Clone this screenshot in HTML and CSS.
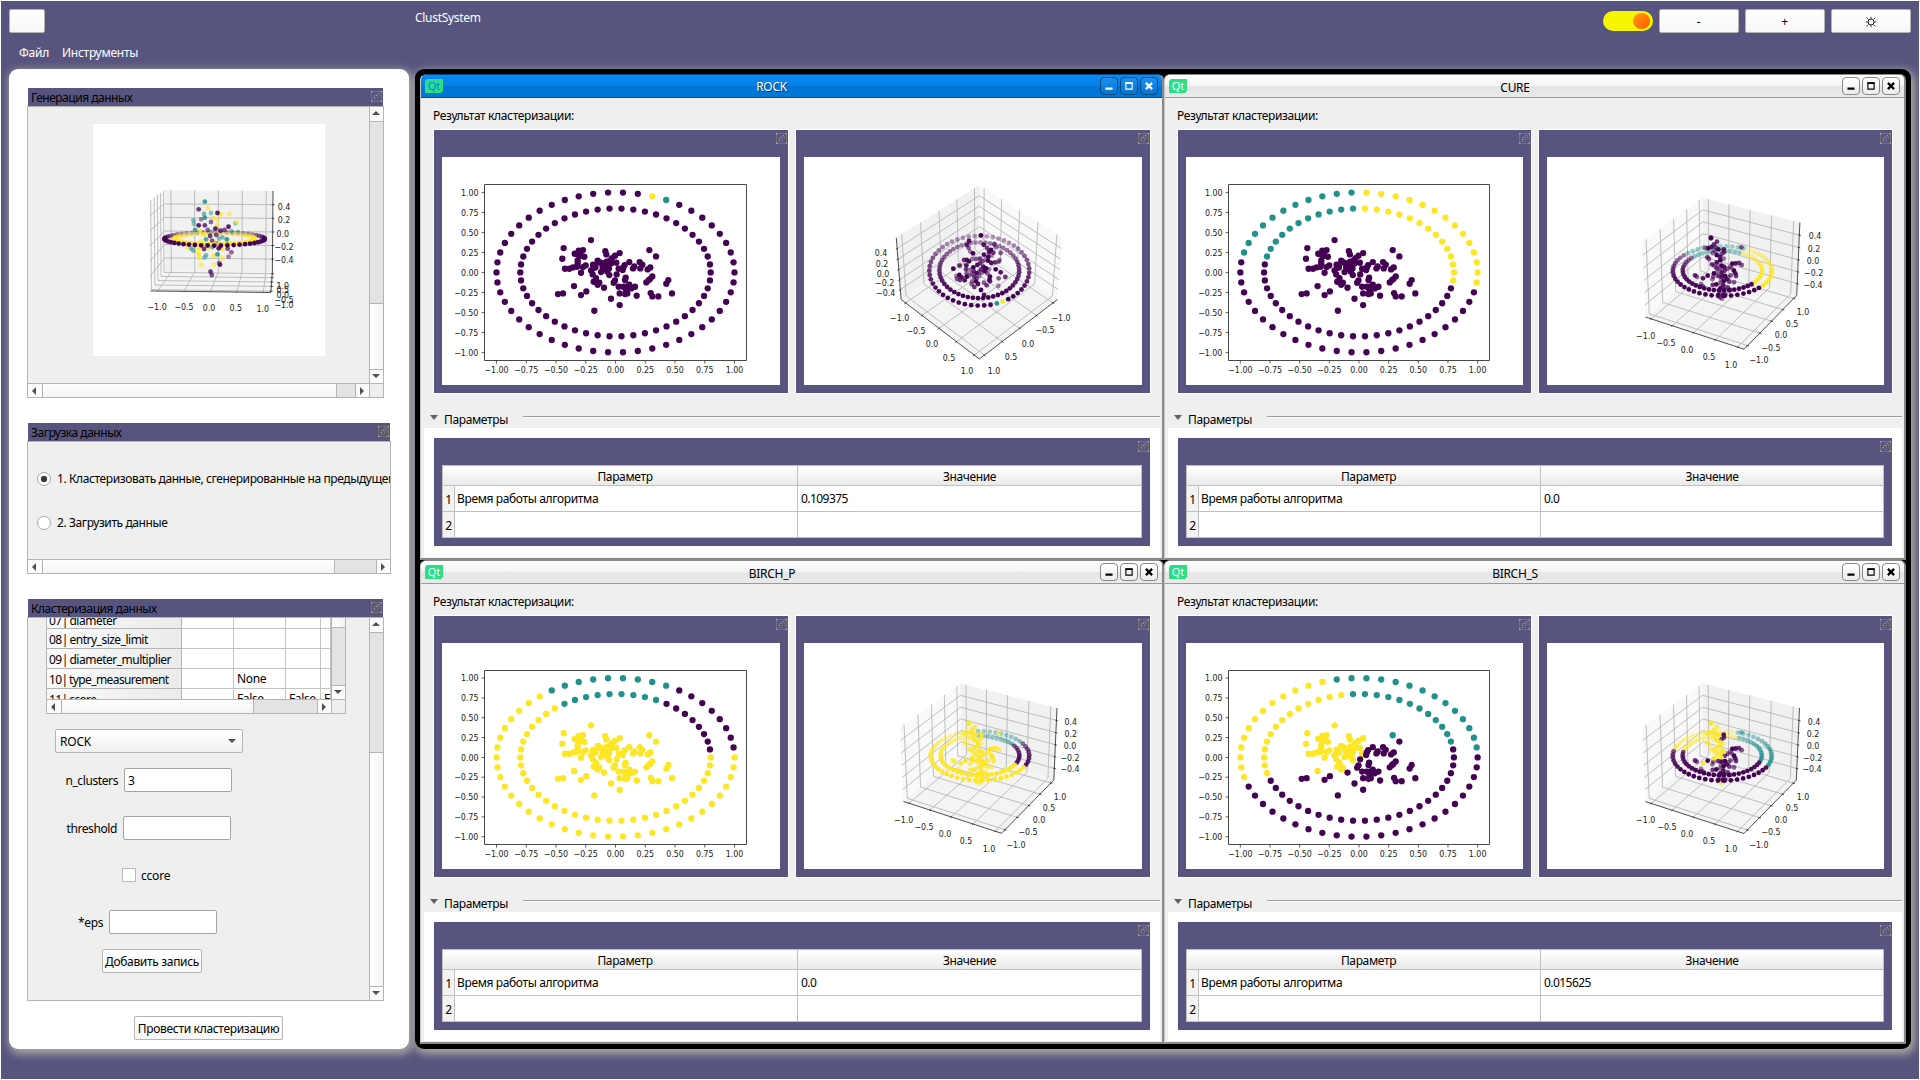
FILE: index.html
```html
<!DOCTYPE html>
<html lang="ru">
<head>
<meta charset="utf-8">
<title>ClustSystem</title>
<link rel="stylesheet" href="styles.css">
</head>
<body>
<svg width="0" height="0" class="defs">
  <symbol id="float" viewBox="0 0 11 11">
    <rect x=".5" y=".5" width="10" height="10" rx="1" fill="none" stroke="#7b786f" stroke-width=".8"/>
    <path d="M3 4.5h3.5v4H3zM4.5 3h4v3.5" fill="none" stroke="#85826f" stroke-width=".8" stroke-dasharray="1.6 .6"/>
    <path d="M0 0h1.5v1.5H0zM9.5 0H11v1.5H9.5zM0 9.5h1.5V11H0zM9.5 9.5H11V11H9.5zM5 4h1v1H5zM3 6h1v1H3zM7 2h1v1H7z" fill="#a7a59c"/>
  </symbol>
  <symbol id="min" viewBox="0 0 18 18"><path d="M5 12h8" stroke="currentColor" stroke-width="2.4"/></symbol>
  <symbol id="max" viewBox="0 0 18 18"><path d="M5.5 5.8h7v6.7h-7z" fill="none" stroke="currentColor" stroke-width="1.3"/><path d="M5 5.8h8" stroke="currentColor" stroke-width="2"/></symbol>
  <symbol id="close" viewBox="0 0 18 18"><path d="M5.5 5.5l7 7M12.5 5.5l-7 7" stroke="currentColor" stroke-width="2.5"/></symbol>
</svg>
<div class="app">
  <header class="top">
    <div class="top-left">
      <div class="bar"><button class="btn sq"></button><span class="app-title">ClustSystem</span></div>
      <nav class="menu"><span class="m1">Файл</span><span class="m2">Инструменты</span></nav>
    </div>
    <div class="top-right">
      <div class="toggle"><i></i></div>
      <button class="btn wide">-</button><button class="btn wide">+</button><button class="btn wide"><svg width="12" height="12" viewBox="0 0 12 12"><circle cx="6" cy="6" r="3" fill="none" stroke="#222"/><path d="M1.6 1.6l1.8 1.8M10.4 1.6L8.6 3.4M1.6 10.4l1.8-1.8M10.4 10.4L8.6 8.6M6 .8v2M6 9.2v2M.8 6h2M9.2 6h2" stroke="#222" stroke-width=".9"/></svg></button>
    </div>
  </header>
  <div class="work">
    <aside class="side">
      <section class="dock d1">
        <div class="dock-title"><span>Генерация данных</span><svg class="fi"><use href="#float"/></svg></div>
        <div class="dock-body">
          <div class="dock-main">
            <div class="view gen"><svg class="plot3" data-name="gen" width="232" height="232"></svg></div>
            <div class="sb v"><i class="b up"></i><i class="g s182"></i><i class="h"></i><i class="b down"></i></div>
          </div>
          <div class="sb hz"><i class="b left"></i><i class="h"></i><i class="g s19"></i><i class="b right"></i><i class="corner"></i></div>
        </div>
      </section>
      <section class="dock d2">
        <div class="dock-title"><span>Загрузка данных</span><svg class="fi"><use href="#float"/></svg></div>
        <div class="dock-body">
          <div class="view radios">
            <div class="radio on"><i></i><span>1. Кластеризовать данные, сгенерированные на предыдущем шаге</span></div>
            <div class="radio"><i></i><span>2. Загрузить данные</span></div>
          </div>
          <div class="sb hz"><i class="b left"></i><i class="h"></i><i class="g s42"></i><i class="b right"></i></div>
        </div>
      </section>
      <section class="dock d3">
        <div class="dock-title"><span>Кластеризация данных</span><svg class="fi"><use href="#float"/></svg></div>
        <div class="dock-body">
          <div class="dock-main">
            <div class="view form">
              <div class="grid">
                <div class="grid-main">
                  <div class="cells">
                    <b class="cut">07| diameter</b><s></s><s></s><s></s><s></s>
                    <b>08| entry_size_limit</b><s></s><s></s><s></s><s></s>
                    <b>09| diameter_multiplier</b><s></s><s></s><s></s><s></s>
                    <b>10| type_measurement</b><s></s><s>None</s><s></s><s></s>
                    <b>11| ccore</b><s></s><s>False</s><s>False</s><s>False</s>
                  </div>
                  <div class="sb v"><i class="h s9"></i><i class="g"></i><i class="b down"></i></div>
                </div>
                <div class="sb hz"><i class="b left"></i><i class="h"></i><i class="g s64"></i><i class="b right"></i><i class="corner"></i></div>
              </div>
              <div class="combo"><span>ROCK</span><i></i></div>
              <div class="field f1"><label>n_clusters</label><div class="input">3</div></div>
              <div class="field f2"><label>threshold</label><div class="input"></div></div>
              <div class="check"><i></i><span>ccore</span></div>
              <div class="field f3"><label>*eps</label><div class="input"></div></div>
              <button class="btn add">Добавить запись</button>
            </div>
            <div class="sb v"><i class="b up"></i><i class="g s120"></i><i class="h"></i><i class="b down"></i></div>
          </div>
        </div>
      </section>
      <button class="btn run">Провести кластеризацию</button>
    </aside>
    <main class="mdi">
      <article class="win active">
        <div class="wt"><span class="qt">Qt</span><span class="wn">ROCK</span><svg class="wb"><use href="#min"/></svg><svg class="wb"><use href="#max"/></svg><svg class="wb"><use href="#close"/></svg></div>
        <div class="res">Результат кластеризации:</div>
        <div class="frames">
          <div class="frame"><svg class="fi"><use href="#float"/></svg><svg class="plot2" data-name="rock" width="338" height="228"></svg></div>
          <div class="frame"><svg class="fi"><use href="#float"/></svg><svg class="plot3" data-name="rock" width="338" height="228"></svg></div>
        </div>
        <div class="ph"><i></i><span>Параметры</span><hr></div>
        <div class="pw"><div class="frame"><svg class="fi"><use href="#float"/></svg>
          <table><colgroup><col class="k0"><col class="k1"><col></colgroup><tr><th colspan="2" class="hp">Параметр</th><th>Значение</th></tr><tr><th class="n">1</th><td>Время работы алгоритма</td><td class="val">0.109375</td></tr><tr><th class="n">2</th><td></td><td></td></tr></table></div></div>
      </article>
      <article class="win">
        <div class="wt"><span class="qt">Qt</span><span class="wn">CURE</span><svg class="wb"><use href="#min"/></svg><svg class="wb"><use href="#max"/></svg><svg class="wb"><use href="#close"/></svg></div>
        <div class="res">Результат кластеризации:</div>
        <div class="frames">
          <div class="frame"><svg class="fi"><use href="#float"/></svg><svg class="plot2" data-name="cure" width="337" height="228"></svg></div>
          <div class="frame"><svg class="fi"><use href="#float"/></svg><svg class="plot3" data-name="cure" width="337" height="228"></svg></div>
        </div>
        <div class="ph"><i></i><span>Параметры</span><hr></div>
        <div class="pw"><div class="frame"><svg class="fi"><use href="#float"/></svg>
          <table><colgroup><col class="k0"><col class="k2"><col></colgroup><tr><th colspan="2" class="hp">Параметр</th><th>Значение</th></tr><tr><th class="n">1</th><td>Время работы алгоритма</td><td class="val">0.0</td></tr><tr><th class="n">2</th><td></td><td></td></tr></table></div></div>
      </article>
      <article class="win">
        <div class="wt"><span class="qt">Qt</span><span class="wn">BIRCH_P</span><svg class="wb"><use href="#min"/></svg><svg class="wb"><use href="#max"/></svg><svg class="wb"><use href="#close"/></svg></div>
        <div class="res">Результат кластеризации:</div>
        <div class="frames">
          <div class="frame"><svg class="fi"><use href="#float"/></svg><svg class="plot2" data-name="birchp" width="338" height="226"></svg></div>
          <div class="frame"><svg class="fi"><use href="#float"/></svg><svg class="plot3" data-name="birchp" width="338" height="226"></svg></div>
        </div>
        <div class="ph"><i></i><span>Параметры</span><hr></div>
        <div class="pw"><div class="frame"><svg class="fi"><use href="#float"/></svg>
          <table><colgroup><col class="k0"><col class="k1"><col></colgroup><tr><th colspan="2" class="hp">Параметр</th><th>Значение</th></tr><tr><th class="n">1</th><td>Время работы алгоритма</td><td class="val">0.0</td></tr><tr><th class="n">2</th><td></td><td></td></tr></table></div></div>
      </article>
      <article class="win">
        <div class="wt"><span class="qt">Qt</span><span class="wn">BIRCH_S</span><svg class="wb"><use href="#min"/></svg><svg class="wb"><use href="#max"/></svg><svg class="wb"><use href="#close"/></svg></div>
        <div class="res">Результат кластеризации:</div>
        <div class="frames">
          <div class="frame"><svg class="fi"><use href="#float"/></svg><svg class="plot2" data-name="birchs" width="337" height="226"></svg></div>
          <div class="frame"><svg class="fi"><use href="#float"/></svg><svg class="plot3" data-name="birchs" width="337" height="226"></svg></div>
        </div>
        <div class="ph"><i></i><span>Параметры</span><hr></div>
        <div class="pw"><div class="frame"><svg class="fi"><use href="#float"/></svg>
          <table><colgroup><col class="k0"><col class="k2"><col></colgroup><tr><th colspan="2" class="hp">Параметр</th><th>Значение</th></tr><tr><th class="n">1</th><td>Время работы алгоритма</td><td class="val">0.015625</td></tr><tr><th class="n">2</th><td></td><td></td></tr></table></div></div>
      </article>
    </main>
  </div>
</div>
<script src="plots.js"></script>
</body>
</html>
```
FILE: styles.css
```css
* { box-sizing: border-box; }
body { margin: 0; font: 12px/16px "Noto Sans", "Open Sans", sans-serif; letter-spacing: -0.36px; color: #000; }
i, b, s { font-style: normal; font-weight: 400; text-decoration: none; }
.defs { position: absolute; }
.app { width: 1920px; height: 1080px; background: #57557f; border: 1px solid #fff; overflow: hidden; }
.top { height: 68px; display: flex; justify-content: space-between; padding: 8px; }
.bar { display: flex; }
.app-title { color: #fff; margin: 1px 0 0 370px; letter-spacing: -0.3px; }
.menu { display: flex; color: #fff; padding: 12px 0 0 10px; gap: 13px; letter-spacing: -0.25px; }
.top-right { display: flex; gap: 6px; height: 24px; align-items: center; }
.btn { font: inherit; letter-spacing: -0.32px; padding: 1px 0 0; height: 24px; border: 1px solid #b4b4b4; border-radius: 2px; background: linear-gradient(#fff, #f7f7f7); color: #000; display: flex; align-items: center; justify-content: center; white-space: nowrap; }
.sq { width: 36px; }
.wide { width: 80px; padding-right: 1px; }
.toggle { width: 50px; height: 20px; border-radius: 10px; background: #f5f500; padding: 2px; display: flex; justify-content: flex-end; }
.toggle i { width: 17px; height: 16px; margin-right: 1px; border-radius: 50%; background: linear-gradient(135deg, #ffa010, #ff5800); }
.work { display: flex; gap: 6px; padding: 0 8px; }
.side { width: 400px; height: 980px; border-radius: 9px; background: #fff; padding: 19px 0 0 18px; box-shadow: 2px 3px 9px 2px rgba(190,190,170,.8); }
.mdi { width: 1496px; height: 980px; border-radius: 9px; background: #000; padding: 5px; display: grid; grid-template-columns: 744px 742px; grid-template-rows: 486px 484px; box-shadow: 2px 3px 9px 2px rgba(190,190,170,.8); }

.dock { width: 357px; }
.dock-title { margin: 0 1px; height: 18px; background: #57557f; display: flex; justify-content: space-between; padding: 2px 1px 0 3px; letter-spacing: -0.48px; }
.dock-body { border: 1px solid #b4b4b4; background: #efefef; display: flex; flex-direction: column; }
.dock-main { display: flex; flex: 1; min-height: 0; }
.view { flex: 1; min-width: 0; overflow: hidden; }
.fi { width: 11px; height: 11px; display: block; flex: none; }
.dock-title .fi { margin-top: 1px; }
.d1 .dock-body { height: 292px; }
.gen { padding: 17px 0 0 65px; }
.gen svg { background: #fff; display: block; }
.d2 { width: 364px; margin-top: 25px; }
.d2 .dock-body { height: 133px; }
.d3 { margin-top: 25px; }
.d3 .dock-body { height: 384px; }

.sb { display: flex; flex: none; background: #fff; }
.sb i { display: flex; align-items: center; justify-content: center; }
.sb.v { width: 14px; flex-direction: column; border-left: 1px solid #b4b4b4; }
.sb.hz { height: 14px; border-top: 1px solid #b4b4b4; }
.sb .b { flex: 0 0 14px; background: #fbfbfb; }
.sb.v .b { padding: 0 1px 2px 0; }
.sb.hz .b { padding-right: 2px; }
.sb .h { flex: 1; background: linear-gradient(90deg, #fff, #f4f4f4); }
.sb.hz .h { background: linear-gradient(#fff, #f4f4f4); }
.sb .g { background: #e3e3e3; }
.v i + i { border-top: 1px solid #b4b4b4; }
.hz i + i { border-left: 1px solid #b4b4b4; }
.sb .corner { flex: 0 0 14px; background: #efefef; }
.sb .s182 { flex: 0 0 182px; }
.sb .s120 { flex: 0 0 120px; }
.sb .s19 { flex: 0 0 19px; }
.sb .s42 { flex: 0 0 42px; }
.sb .s64 { flex: 0 0 64px; }
.sb .s9 { flex: 0 0 9px; }
.grid .sb .g:not(.s64) { flex: 1; }
.b::after { content: ""; border: 4px solid transparent; }
.up::after { border-bottom-color: #505050; border-top: 0; }
.down::after { border-top-color: #505050; border-bottom: 0; }
.left::after { border-right-color: #505050; border-left: 0; }
.right::after { border-left-color: #505050; border-right: 0; }

.radios { padding: 29px 0 0 9px; }
.radio { display: flex; gap: 6px; height: 16px; margin-bottom: 28px; white-space: nowrap; align-items: center; letter-spacing: -0.4px; }
.radio i { width: 14px; height: 14px; flex: none; border: 1px solid #a8a8a8; border-radius: 50%; background: #fff; }
.radio.on i { background: radial-gradient(circle, #3a3a3a 2.8px, #fff 3.6px); }

.form { padding-left: 18px; }
.grid { width: 300px; border: 1px solid #b4b4b4; border-top: 0; background: #fff; }
.grid-main { display: flex; height: 81px; }
.cells { flex: 1; min-width: 0; overflow: hidden; display: grid; grid-template-columns: 135px 52px 52px 35px 10px; grid-template-rows: 11px 20px 20px 20px 20px; white-space: nowrap; }
.cells > * { overflow: hidden; border-right: 1px solid #c4c4c4; border-bottom: 1px solid #c4c4c4; padding: 1px 2px; line-height: 19px; }
.cells s { padding: 0 3px; background: #fff; }
.cells b { background: linear-gradient(90deg, #fafafa, #ebebeb); border-color: #b4b4b4; letter-spacing: -0.5px; word-spacing: -1px; }
.cells b:nth-child(n+16) { letter-spacing: -0.6px; }
.cells .cut { line-height: 5px; padding-top: 0; }
.combo { margin: 15px 0 0 9px; width: 188px; height: 24px; border: 1px solid #b4b4b4; border-radius: 2px; background: linear-gradient(#fff, #f0f0f0); display: flex; justify-content: space-between; align-items: center; padding: 0 6px 0 4px; }
.combo span { padding-top: 1px; letter-spacing: -0.2px; }
.combo i { border: 4px solid transparent; border-top-color: #505050; border-bottom: 0; }
.field, .check { display: flex; height: 24px; align-items: center; justify-content: flex-start; }
.field label { text-align: right; margin-right: 6px; padding-top: 2px; letter-spacing: -0.4px; }
.f1 label { width: 72px; } .f2 label { width: 71px; } .f3 label { width: 57px; }
.input { width: 108px; height: 24px; border: 1px solid #a4a4a4; border-radius: 2px; background: #fff; padding: 4px 3px; }
.f1 { margin-top: 15px; }
.f2 { margin-top: 24px; }
.check { margin: 23px 0 0 76px; gap: 5px; letter-spacing: -0.2px; }
.check span { padding-top: 2px; }
.check i { width: 14px; height: 14px; border: 1px solid #b8b8b8; background: #fff; }
.f3 { margin-top: 23px; }
.add { width: 100px; margin: 15px 0 0 56px; }
.run { width: 149px; margin: 15px 0 0 107px; }

.win { background: #efefef; border-radius: 6px 6px 0 0; border: solid #888; border-width: 1px 2px 2px 1px; border-left-color: #c8c8c8; display: flex; flex-direction: column; overflow: hidden; }
.wt { height: 23px; flex: none; display: flex; align-items: center; padding: 0 4px 0 4px; gap: 2px; background: linear-gradient(#fff, #f3f3f3 50%, #e5e5e5 52%, #eaeaea); border-bottom: 1px solid #999; letter-spacing: -0.3px; }
.active .wt { background: linear-gradient(#0a8bf5, #0480e6 50%, #0074d4 52%, #0078d7); border-bottom-color: #034a85; color: #fff; }
.win.active { border-top-color: #034a85; }
.qt { width: 18px; height: 14px; background: #2cde85; color: #fff; font-size: 11px; line-height: 14px; text-align: center; clip-path: polygon(10% 0, 100% 0, 100% 80%, 90% 100%, 0 100%, 0 16%); letter-spacing: 0; }
.active .qt { color: #0480e6; }
.wn { flex: 1; text-align: center; padding: 3px 0 0 1px; }
.active .wn { text-shadow: 1px 1px #023a68; padding: 1px 0 0; }
.wb { width: 18px; height: 18px; border: 1px solid #888; border-radius: 4px; background: linear-gradient(#fff, #ececec); }
.active .wb { border-color: #034a85; background: linear-gradient(#1a90ee, #0474d0); }
.res { padding: 10px 0 0 12px; height: 32px; flex: none; }
.frames { display: flex; gap: 8px; padding: 0 13px; flex: 1; }
.frame { background: #57557f; flex: 1; padding: 3px 8px 8px; box-shadow: 0 0 0 1px #fff; }
.frame > .fi { margin: 0 -7px 13px auto; }
.plot2, .plot3 { display: block; background: #fff; }
.ph { height: 35px; flex: none; display: flex; padding: 17px 4px 0 9px; align-items: flex-start; }
.ph i { border: 4px solid transparent; border-top: 5px solid #606060; border-bottom: 0; margin-top: 5px; }
.ph span { margin: 2px 15px 0 6px; width: 64px; }
.ph hr { flex: 1; margin: 6px -2px 0 0; border: 0; border-top: 1px solid #999; border-bottom: 1px solid #fff; }
.pw { background: #fff; height: 129px; margin: 0 2px 1px 3px; padding: 10px 10px 0 10px; flex: none; }
.pw .frame { height: 108px; box-shadow: none; }
table { width: 100%; height: 73px; border-collapse: collapse; background: #fff; table-layout: fixed; border: 1px solid #b0b0b0; }
th, td { font-weight: 400; border: 1px solid #c0c0c0; padding: 0 2px; height: 26px; text-align: left; }
tr:first-child th { height: 20px; text-align: center; background: linear-gradient(#fff, #e9e9e9); padding-top: 2px; }
tr:first-child .hp { padding-left: 12px; }
.k0 { width: 12px; }
.k1 { width: 343px; }
.k2 { width: 342px; }
th.n { background: #f3f3f3; padding: 2px 0 0; text-align: center; }
td { padding-top: 1px; }
.val { padding-left: 3px; letter-spacing: -0.55px; }
svg text { font-family: "DejaVu Sans", sans-serif; font-size: 8.8px; letter-spacing: 0; fill: #222; text-anchor: middle; }
```
FILE: plots.js
```js
const P = '#440154', T = '#21918c', Y = '#fde725';

// Samples of the central blob; 357 x 240 units per 1.0, origin at (616.5, 637)
const BLOB = [543,540,461,564,457,596,494,581,506,572,519,570,504,584,513,587,523,590,503,601,465,626,478,626,489,622,501,620,503,610,513,638,519,621,527,616,586,573,589,583,629,579,615,587,606,594,601,601,619,608,563,602,571,607,577,614,549,614,556,618,543,631,550,624,548,643,590,605,593,613,585,618,578,625,573,636,586,627,597,625,592,635,598,645,603,610,582,610,556,622,626,626,638,630,644,615,640,622,658,606,669,625,673,619,689,606,697,614,691,625,713,628,721,622,718,570,738,589,620,643,615,661,611,668,647,653,645,660,558,654,551,665,557,665,568,668,563,674,582,683,492,678,444,702,459,700,513,705,529,694,603,716,629,735,553,752,626,680,640,680,650,680,658,674,664,685,675,680,629,700,645,702,652,700,648,690,680,707,709,667,716,660,720,657,727,649,769,671,775,660,722,699,727,709,745,709,786,700];

// Cluster colour of ring point k (0..49) on the outer or inner ring
const RING = {
  rock: (k, o) => o && k === 10 ? Y : o && k === 9 ? T : P,
  cure: k => k <= 12 || k === 49 ? Y : k <= 23 ? T : P,
  birchp: k => k >= 9 && k <= 17 ? T : k >= 1 && k <= 8 ? P : Y,
  birchs: (k, o) => o ? (k >= 1 && k <= 14 ? T : k >= 15 && k <= 27 ? Y : P)
                      : (k >= 2 && k <= 13 ? T : k >= 14 && k <= 27 ? Y : P),
  gen: (k, o) => o ? P : Y
};
const BLOBC = {
  rock: () => P, cure: () => P, birchp: () => Y,
  birchs: (x, y) => x === 718 && y === 570 ? T : (x < 632 && y < 640) || (x < 600 && y < 680) ? Y : P
};

const f = n => n.toFixed(2);
const dot = (x, y, c, r, a = 1) => `<circle cx="${f(x)}" cy="${f(y)}" r="${r}" fill="${c}" fill-opacity="${f(a)}"/>`;
const line = (a, b, c, w) => `<path d="M${f(a[0])} ${f(a[1])}L${f(b[0])} ${f(b[1])}" stroke="${c}" stroke-width="${w}"/>`;
function label(v, d, x, y) {
  const s = v.toFixed(d).replace('-', '\u2212');
  const em = 0.318 + 0.636 * (d + 1) + (v < 0 ? 0.838 : 0);
  return `<text x="${f(x)}" y="${f(y + 3.2)}" textLength="${f(em * 7.9)}" lengthAdjust="spacingAndGlyphs">${s}</text>`;
}

function plot2(svg) {
  const n = svg.dataset.name, W = +svg.getAttribute('width'), H = +svg.getAttribute('height');
  const sx = 119 * W / 338, sy = 80 * H / 228, ox = 173.5 * W / 338, oy = 115.4 * H / 228;
  const X = x => ox + x * sx, Yy = y => oy - y * sy;
  let s = '';
  for (const [R, o] of [[1, true], [0.8, false]])
    for (let k = 0; k < 50; k++) {
      const t = k * Math.PI / 25;
      s += dot(X(R * Math.cos(t)), Yy(R * Math.sin(t)), RING[n](k, o), 3.15);
    }
  for (let i = 0; i < BLOB.length; i += 2)
    s += dot(X((BLOB[i] - 616.5) / 357), Yy((637 - BLOB[i + 1]) / 240), BLOBC[n](BLOB[i], BLOB[i + 1]), 3.15);
  const l = 42.5, r = W === 338 ? 304.5 : 303.5, t = 27.5, b = Math.round(203.5 * H / 228) - 0.5;
  s += `<path d="M${l} ${t}H${r}V${b}H${l}z" fill="none" stroke="#333" stroke-width=".9"/>`;
  for (let i = -4; i <= 4; i++) {
    const v = i / 4;
    s += line([X(v), b], [X(v), b + 3], '#333', 0.8) + line([l - 3, Yy(v)], [l, Yy(v)], '#333', 0.8);
    s += label(v, 2, X(v), b + 9);
    s += label(v, 2, l - 6 - (v < 0 ? 12.2 : 8.8), Yy(v));
  }
  svg.innerHTML = s;
}

// Sampled screen positions of the blob for the default camera and for the raised one
const B60 = [513,713,513,715,531,725,604,742,496,744,505,745,515,741,522,733,528,742,524,752,535,748,551,748,552,757,545,762,518,759,530,765,540,771,502,772,507,777,551,776,541,781,530,787,516,793,523,797,535,796,545,797,552,801,530,805,540,808,532,817,522,820,545,818,554,812,562,806,571,800,577,791,587,790,597,789,605,795,575,805,582,812,586,820,588,828,572,826,565,832,555,828,545,830,535,828,520,830,517,838,503,827,489,835,465,826,470,830,543,840,551,843,560,838,568,845,582,847,540,850,529,853,550,856,518,855,488,859,483,852,541,865,552,868,563,862,571,870,545,878,535,885,549,886,556,884,540,892,546,896];
const B45 = [603,526,567,543,561,555,566,564,571,575,579,580,611,554,621,564,643,552,647,562,633,570,627,576,640,578,662,579,635,587,625,590,612,584,600,596,588,597,577,597,567,604,560,600,552,600,538,616,540,618,520,626,559,616,558,628,560,640,571,630,580,622,592,615,600,610,608,604,616,598,624,602,634,609,645,607,656,605,659,600,647,628,662,637,676,651,656,655,655,678,630,650,628,660,630,664,622,640,627,628,618,625,610,620,603,628,597,636,606,638,614,633,590,640,582,634,575,642,567,648,560,650,554,661,540,660,531,657,529,648,538,645,545,652,583,650,590,655,598,648,588,664,594,672,583,681,575,672,577,663,603,690,612,705,620,676,612,668];
const BGEN = 't502,605 p487,628 y510,624 t500,642 t517,639 p533,639 y541,643 y562,643 t474,661 p493,658 t502,653 y523,654 y533,659 p517,666 t475,672 p487,676 p502,676 y533,675 y580,667 t577,670 p560,680 t478,690 y490,692 p509,690 t518,695 p528,686 p540,692 p550,690 t567,694 t583,696 y500,704 p515,708 p530,705 t545,712 t537,716 t556,718 t505,718 p520,722 y492,724 p530,730 t556,732 y460,742 t468,745 t474,752 y483,750 y488,745 p500,747 y510,745 t520,742 t541,742 p536,745 y545,748 p558,746 p567,757 p560,770 t533,763 y524,768 y545,774 t505,766 t501,773 y487,762 y489,774 y493,794 y524,794 p537,789 p539,794 p516,815 p519,825';

const VIEW = {
  cure: { az: -60, el: 30, box: [95, 40.7, 252.9, 192.2], o: [21, 471], q: [3, 3],
    a: [317,1007,378,1028,441,1049,507,1070,573,1094], b: [657,1079,693,1043,723,1004,756,971,789,935], z: [819,854,821,818,819,782,822,746,825,707] },
  birchs: { az: -60, el: 30, box: [95, 40.3, 252.5, 190.5], o: [21, 129], q: [3, 3],
    a: [317,659,381,680,441,701,507,722,573,746], b: [657,734,693,695,723,659,756,623,789,590], z: [816,506,818,473,819,437,819,401,822,365] },
  birchp: { az: -60, el: 30, box: [96, 40.3, 253, 190.3], o: [72, 129], q: [3, 3],
    a: [371,659,432,680,495,701,558,722,627,746], b: [708,734,744,695,777,659,807,623,840,590], z: [870,506,870,473,870,437,872,401,872,365] },
  rock: { az: 45, el: 44, box: [92.3, 28, 258.3, 202], o: [72, 291], q: [3, 3],
    a: [843,773,795,809,744,851,693,890,642,932], b: [359,773,408,812,456,851,507,893,561,932], z: [317,698,314,668,309,641,306,611,303,578] },
  gen: { az: -86, el: 7.5, box: [56.7, 66.3, 180, 168.5], o: [228, 372], q: [2.45, 3],
    a: [385,920,451,920,512,923,578,923,644,926], b: [696,914,696,899,693,884,693,870,693,857], z: [696,779,696,740,693,701,696,659,696,620] }
};

function plot3(svg) {
  const n = svg.dataset.name, V = VIEW[n], L = 1.14, Z = 0.6;
  const A = V.az * Math.PI / 180, E = V.el * Math.PI / 180;
  const cA = Math.cos(A), sA = Math.sin(A), cE = Math.cos(E), sE = Math.sin(E);
  const raw = (x, y, z) => {
    x *= 0.5715 / L; y *= 0.5715 / L; z *= 0.4286 / Z;
    const d = 10 - (x * cE * cA + y * cE * sA + z * sE);
    return [(-sA * x + cA * y) / d, (sE * cA * x + sE * sA * y - cE * z) / d, d];
  };
  const c = [];
  for (const x of [-L, L]) for (const y of [-L, L]) for (const z of [-Z, Z]) c.push(raw(x, y, z));
  const xs = c.map(p => p[0]), ys = c.map(p => p[1]);
  const x0 = Math.min(...xs), x1 = Math.max(...xs), y0 = Math.min(...ys), y1 = Math.max(...ys), B = V.box;
  const pr = (x, y, z) => {
    const p = raw(x, y, z);
    return [B[0] + (p[0] - x0) / (x1 - x0) * (B[2] - B[0]), B[1] + (p[1] - y0) / (y1 - y0) * (B[3] - B[1]), p[2]];
  };
  const bx = cA > 0 ? -L : L, by = sA > 0 ? -L : L;
  const poly = (pts, col) => `<path d="M${pts.map(p => { const q = pr(...p); return f(q[0]) + ' ' + f(q[1]); }).join('L')}z" fill="${col}"/>`;
  let s = poly([[bx, -L, -Z], [bx, L, -Z], [bx, L, Z], [bx, -L, Z]], '#f9f9f9')
    + poly([[-L, by, -Z], [L, by, -Z], [L, by, Z], [-L, by, Z]], '#f1f1f1')
    + poly([[-L, -L, -Z], [L, -L, -Z], [L, L, -Z], [-L, L, -Z]], '#f4f4f4');
  const G = '#b4b4b4', K = '#222', gl = (a, b) => line(pr(...a), pr(...b), G, 0.85);
  for (let i = -2; i <= 2; i++) {
    const v = i / 2, z = i / 5;
    s += gl([v, -by, -Z], [v, by, -Z]) + gl([v, by, -Z], [v, by, Z]);
    s += gl([-bx, v, -Z], [bx, v, -Z]) + gl([bx, v, -Z], [bx, v, Z]);
    s += gl([-bx, by, z], [bx, by, z]) + gl([bx, by, z], [bx, -by, z]);
    const k = 1.03, j = 0.98;
    s += line(pr(v, -by * k, -Z), pr(v, -by * j, -Z), K, 0.8);
    s += line(pr(-bx * k, v, -Z), pr(-bx * j, v, -Z), K, 0.8);
    s += line(pr(-bx * k, by, z), pr(-bx * j, by, z), K, 0.8);
  }
  s += line(pr(-L, -by, -Z), pr(L, -by, -Z), K, 0.8) + line(pr(-bx, -L, -Z), pr(-bx, L, -Z), K, 0.8) + line(pr(-bx, by, -Z), pr(-bx, by, Z), K, 0.8);

  const pts = [];
  for (const [R, o] of [[1, true], [0.8, false]])
    for (let k = 0; k < 50; k++) {
      const t = k * Math.PI / 25, q = pr(R * Math.cos(t), R * Math.sin(t), 0);
      pts.push([q[0], q[1], RING[n](k, o), q[2]]);
    }
  const loc = (x, y) => [(x - V.o[0]) / V.q[0], (y - V.o[1]) / V.q[1]];
  const cx = 10;
  if (n === 'gen') {
    BGEN.split(' ').forEach((e, i) => {
      const [x, y] = e.slice(1).split(',').map(Number), q = loc(x, y);
      pts.push([q[0], q[1], { p: P, t: T, y: Y }[e[0]], cx + (i % 5 - 1.2) * 0.13]);
    });
  } else {
    const src = n === 'rock' ? B45 : B60;
    for (let i = 0; i < src.length; i += 2) {
      const x = src[i], y = src[i + 1];
      const q = n === 'rock' ? loc(x, y) : [(x - 21) / 3 + (n === 'birchp' ? 0.7 : 0), (y - 471) / 3 * (n === 'cure' ? 1 : 0.992)];
      let col = n === 'birchp' ? Y : P;
      if (n === 'birchs') col = x === 604 ? T : x > 553 || (y >= 822 && y < 890 && x !== 489) || (y > 745 && y < 763 && x >= 540) ? P : Y;
      pts.push([q[0], q[1], col, cx + ((i / 2) % 5 - 2.2) * 0.14]);
    }
  }
  pts.sort((a, b) => b[3] - a[3]);
  const ds = pts.map(p => p[3]), d0 = Math.min(...ds), d1 = Math.max(...ds);
  for (const p of pts) s += dot(p[0], p[1], p[2], 2.4, 0.38 + 0.62 * Math.min(1, (d1 - p[3]) / (d1 - d0) * 1.2));
  ['a', 'b', 'z'].forEach(ax => {
    for (let i = 0; i < 5; i++) {
      const q = loc(V[ax][2 * i], V[ax][2 * i + 1]);
      s += label(ax === 'z' ? (i - 2) / 5 : (i - 2) / 2, 1, q[0], q[1]);
    }
  });
  svg.innerHTML = s;
}

document.querySelectorAll('.plot2').forEach(plot2);
document.querySelectorAll('.plot3').forEach(plot3);
```
